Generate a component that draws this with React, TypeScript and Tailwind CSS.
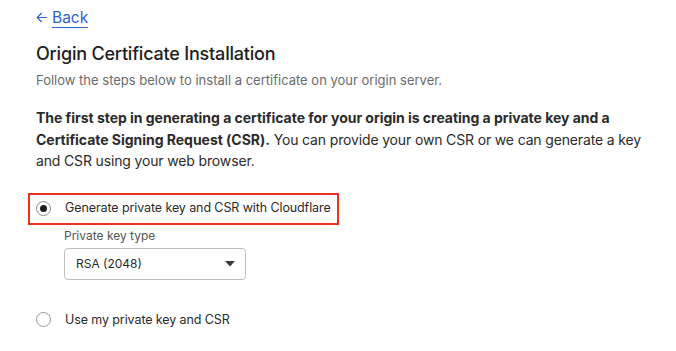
export default function App() {
  return (
    <div className="min-h-screen bg-white text-[#313131] font-['Inter',sans-serif] pl-9 pr-4 pt-[5px]">
      {/* Back link */}
      <a href="#" className="inline-flex items-center gap-[4px] text-[#2f61d0] text-[15.5px] leading-5">
        <svg width="12" height="11" viewBox="0 0 12 11" fill="none" stroke="currentColor" strokeWidth="1.2">
          <path d="M11 5.5H1.2M5.7 1L1.2 5.5l4.5 4.5" />
        </svg>
        <span className="border-b border-[#2f61d0] leading-[19px]">Back</span>
      </a>

      <h1 className="mt-[13px] text-[18px] leading-6 font-medium tracking-[-0.2px] text-[#1d1d1d]">
        Origin Certificate Installation
      </h1>
      <p className="mt-[4px] text-[13px] leading-5 text-[#6b6b6b]">
        Follow the steps below to install a certificate on your origin server.
      </p>

      <p className="mt-[17px] text-[14px] leading-[21.5px] text-[#2b2b2b] whitespace-nowrap tracking-[-0.15px]">
        <b className="font-bold tracking-[-0.03px]">
          The first step in generating a certificate for your origin is creating a private key and a
          <br />
          Certificate Signing Request (CSR).
        </b>{" "}
        You can provide your own CSR or we can generate a key
        <br />
        and CSR using your web browser.
      </p>

      {/* Option 1 */}
      <div className="mt-[21px] -ml-2 w-[311px] h-[32px] border-2 border-[#f0301d] flex items-center pl-[6px] gap-[14px]">
        <span className="w-[15px] h-[15px] shrink-0 rounded-full border border-[#8a8a8a] flex items-center justify-center">
          <span className="w-[7px] h-[7px] rounded-full bg-[#1d1d1d]" />
        </span>
        <span className="text-[12.5px] text-[#2b2b2b] whitespace-nowrap tracking-[-0.1px]">
          Generate private key and CSR with Cloudflare
        </span>
      </div>

      <div className="pl-7">
        <div className="mt-[1px] text-[12px] leading-5 text-[#555]">Private key type</div>
        <div className="mt-[2px] w-[182px] h-[32px] border border-[#bdbdbd] rounded-[4px] flex items-center justify-between pl-[11px] pr-[10px]">
          <span className="text-[12px] text-[#2b2b2b]">RSA (2048)</span>
          <svg width="10" height="6" viewBox="0 0 10 6">
            <path d="M0 0h10L5 5.5z" fill="#3a3a3a" />
          </svg>
        </div>
      </div>

      {/* Option 2 */}
      <div className="mt-[31px] flex items-center gap-[14px]">
        <span className="w-[15px] h-[15px] shrink-0 rounded-full border border-[#9a9a9a]" />
        <span className="text-[12.5px] text-[#2b2b2b] tracking-[-0.1px]">Use my private key and CSR</span>
      </div>
    </div>
  )
}
